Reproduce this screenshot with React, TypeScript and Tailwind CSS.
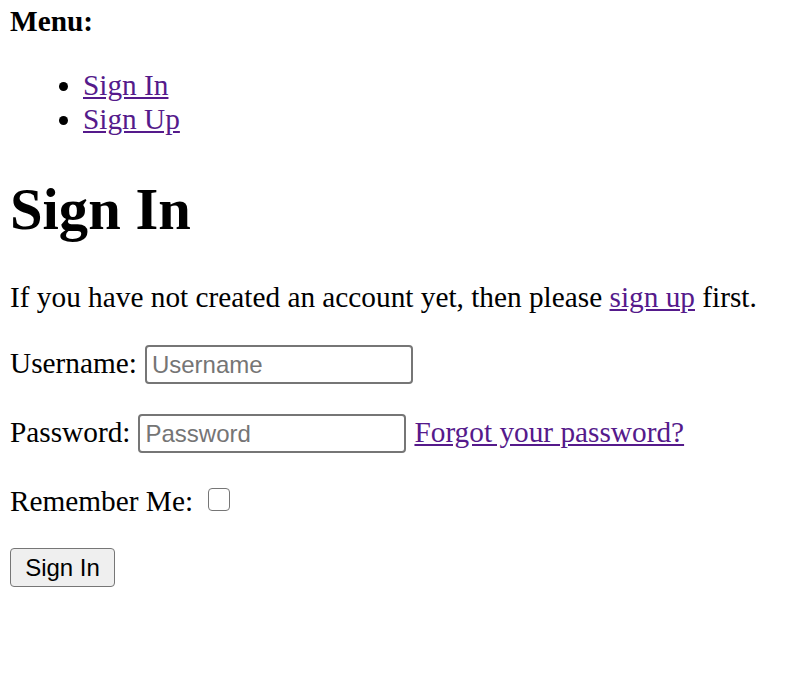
export default function App() {
  return (
    <div className="min-h-[684px] bg-white px-[10px] pt-[4px] font-['Liberation_Serif',serif] text-[29.3px] leading-[34px] text-black">
      <div className="font-bold">Menu:</div>
      <ul className="mt-[30px] list-disc pl-[73px]">
        <li>
          <a href="#" className="text-[#551a8b] underline">
            Sign In
          </a>
        </li>
        <li>
          <a href="#" className="text-[#551a8b] underline">
            Sign Up
          </a>
        </li>
      </ul>

      <h1 className="mt-[40px] text-[58.6px] leading-[67px] font-bold">Sign In</h1>

      <p className="mt-[37px]">
        If you have not created an account yet, then please{" "}
        <a href="#" className="text-[#551a8b] underline">
          sign up
        </a>{" "}
        first.
      </p>

      <form className="mt-[31px]" onSubmit={(e) => e.preventDefault()}>
        <div className="flex items-baseline">
          <label htmlFor="username">Username:</label>
          <input
            id="username"
            type="text"
            placeholder="Username"
            className="ml-[8px] h-[39px] w-[268px] rounded-[4px] border-2 border-[#767676] bg-white px-[5px] font-['Liberation_Sans',sans-serif] text-[24px] placeholder:text-[#757575]"
          />
        </div>

        <div className="mt-[30px] flex items-baseline">
          <label htmlFor="password">Password:</label>
          <input
            id="password"
            type="password"
            placeholder="Password"
            className="ml-[8px] h-[39px] w-[268px] rounded-[4px] border-2 border-[#767676] bg-white px-[5px] font-['Liberation_Sans',sans-serif] text-[24px] placeholder:text-[#757575]"
          />
          <a href="#" className="ml-[8px] text-[#551a8b] underline">
            Forgot your password?
          </a>
        </div>

        <div className="mt-[31px] flex h-[34px] items-start">
          <label htmlFor="remember">Remember Me:</label>
          <input
            id="remember"
            type="checkbox"
            className="mt-[4px] ml-[15px] h-[23px] w-[22px] appearance-none rounded-[4px] border-[1.5px] border-[#767676] bg-white"
          />
        </div>

        <button
          type="submit"
          className="mt-[30px] flex h-[39px] w-[105px] items-center justify-center rounded-[4px] border-[1.5px] border-[#767676] bg-[#efefef] font-['Liberation_Sans',sans-serif] text-[24px] leading-none text-black"
        >
          Sign In
        </button>
      </form>
    </div>
  );
}
